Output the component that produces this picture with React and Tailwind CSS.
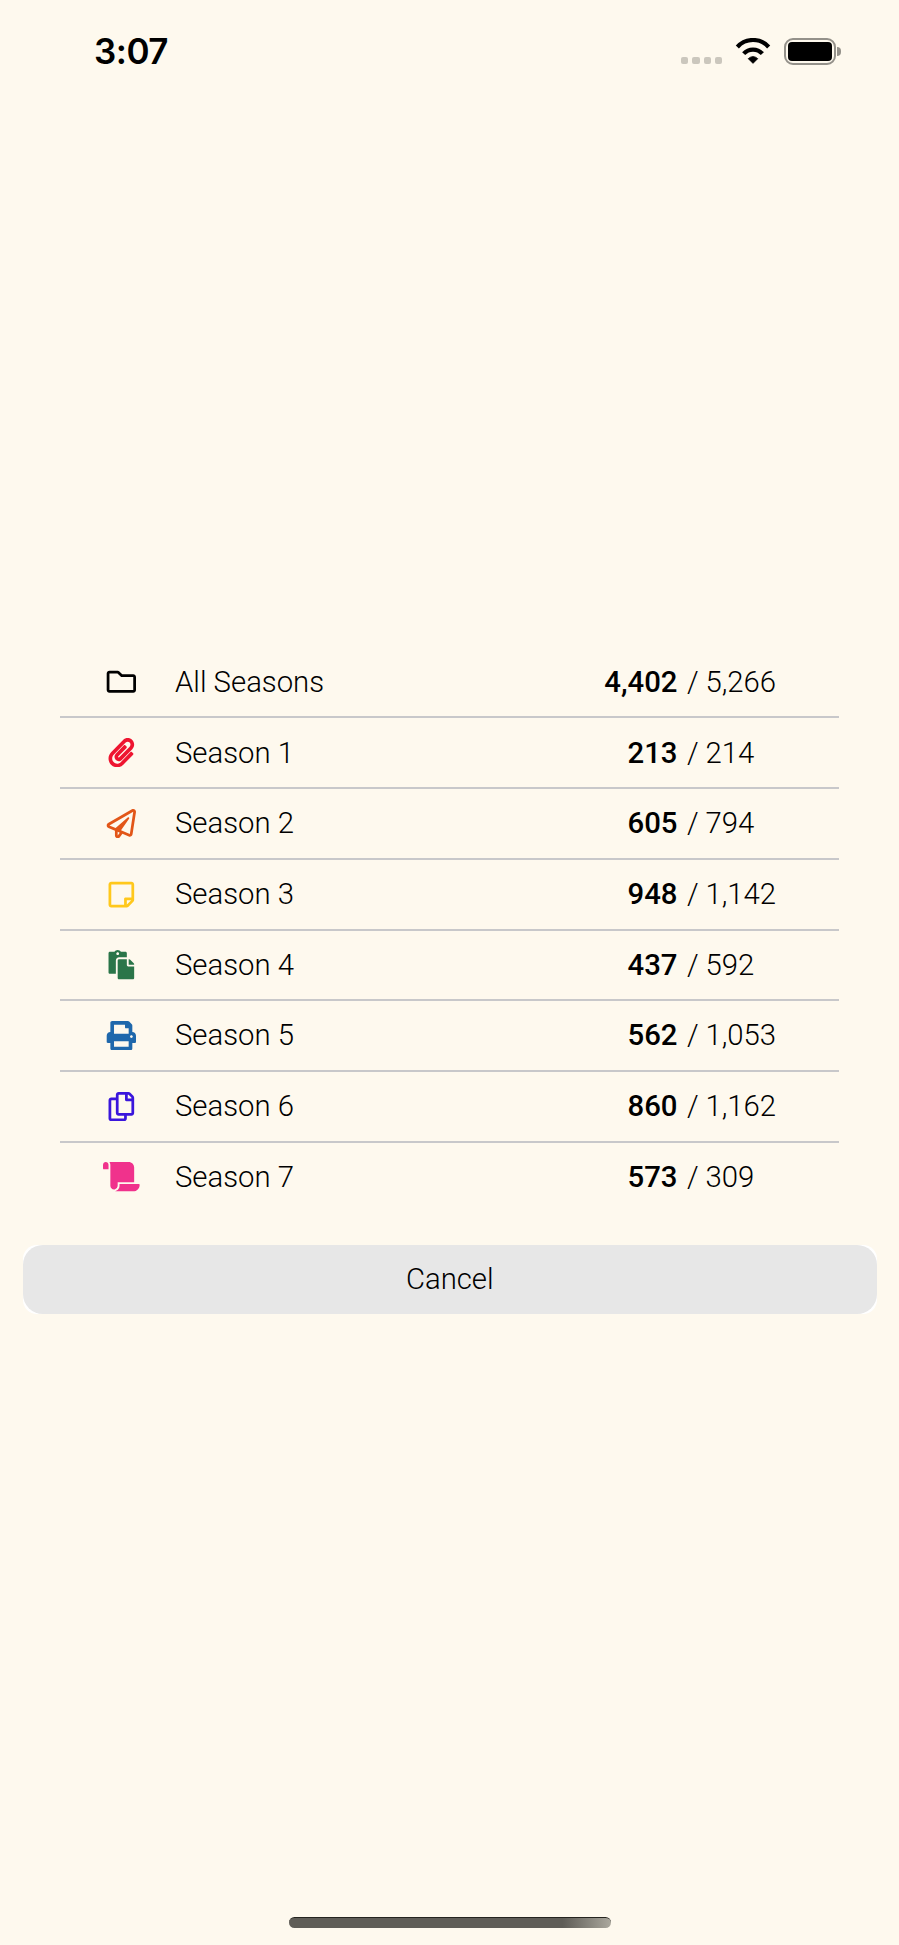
import React from 'react';
import {
  FaRegFolder,
  FaPaperclip,
  FaRegPaperPlane,
  FaRegStickyNote,
  FaPaste,
  FaPrint,
  FaRegCopy,
  FaScroll,
} from 'react-icons/fa';

const seasons = [
  { name: 'All Seasons', Icon: FaRegFolder, color: 'text-black', owned: '4,402', total: '5,266' },
  { name: 'Season 1', Icon: FaPaperclip, color: 'text-[#ee1530]', owned: '213', total: '214' },
  { name: 'Season 2', Icon: FaRegPaperPlane, color: 'text-[#e25618]', owned: '605', total: '794' },
  { name: 'Season 3', Icon: FaRegStickyNote, color: 'text-[#ffc81c]', owned: '948', total: '1,142' },
  { name: 'Season 4', Icon: FaPaste, color: 'text-[#2a7549]', owned: '437', total: '592' },
  { name: 'Season 5', Icon: FaPrint, color: 'text-[#1f68ac]', owned: '562', total: '1,053' },
  { name: 'Season 6', Icon: FaRegCopy, color: 'text-[#3a16dc]', owned: '860', total: '1,162' },
  { name: 'Season 7', Icon: FaScroll, color: 'text-[#f0328c]', owned: '573', total: '309' },
];

function StatusBar() {
  return (
    <header className="flex h-[102px] items-center justify-between pr-[58px] pl-[94px]">
      <span className="font-['Inter',sans-serif] text-[35px] leading-none font-semibold tracking-[-0.5px] text-black">
        3:07
      </span>
      <div className="flex h-[27px] items-end">
        <div className="mb-px flex gap-[4px]">
          {[0, 1, 2, 3].map((i) => (
            <span key={i} className="h-[7px] w-[7.25px] rounded-[2px] bg-[#cbc7bd]" />
          ))}
        </div>
        <svg className="ml-[13px] h-[27px] w-[36px]" viewBox="0 0 108 81" fill="none" stroke="#000" strokeWidth="12.5">
          <path d="M7 27 A63 63 0 0 1 101 27" />
          <path d="M26 47 A38 38 0 0 1 82 47" />
          <path
            d="M54 76 L40 62 Q54 50 68 62 Z"
            fill="#000"
            strokeWidth="3"
            strokeLinejoin="round"
          />
        </svg>
        <div className="ml-[13px] flex h-[27px] w-[52px] rounded-[9px] border-2 border-[#94918a] p-[2px]">
          <div className="grow rounded-[4px] bg-black" />
        </div>
        <div className="mb-[9px] ml-[1px] h-[9px] w-[4px] rounded-r-[4px] bg-[#94918a]" />
      </div>
    </header>
  );
}

function SeasonRow({ name, Icon, color, owned, total }) {
  return (
    <li className="flex h-[70.7px] items-center border-b-2 border-[#c8c8ca] last:border-transparent">
      <span className="flex w-[123px] shrink-0 justify-center">
        <Icon className={`h-[29.3px] w-[36.7px] ${color}`} />
      </span>
      <span className="-ml-[8px] grow pt-px">{name}</span>
      <span className="w-[120.5px] pt-px text-right font-medium">{owned}</span>
      <span className="w-[28px] pt-px pl-[9.5px]">/</span>
      <span className="w-[133.5px] pt-px">{total}</span>
    </li>
  );
}

export default function App() {
  return (
    <div className="flex h-[1945px] w-[899px] flex-col bg-[#fef9ee] font-['Roboto',sans-serif] text-[29.3px] leading-none font-light text-black">
      <StatusBar />
      <main className="grow pt-[545.8px]">
        <ul className="ml-[60px] w-[779px]">
          {seasons.map((season) => (
            <SeasonRow key={season.name} {...season} />
          ))}
        </ul>
        <div className="mr-[22px] ml-[22.5px] mt-[32px] h-[68.5px] rounded-[14px] bg-white">
          <button className="h-full w-full rounded-[20px] bg-[#e7e7e7] pt-px">Cancel</button>
        </div>
      </main>
      <footer className="flex justify-center pb-[17px]">
        <div className="h-[11px] w-[322px] rounded-full border-t border-[#25241f] bg-gradient-to-r from-[#5f5d57] from-85% to-[#aba89e]" />
      </footer>
    </div>
  );
}
